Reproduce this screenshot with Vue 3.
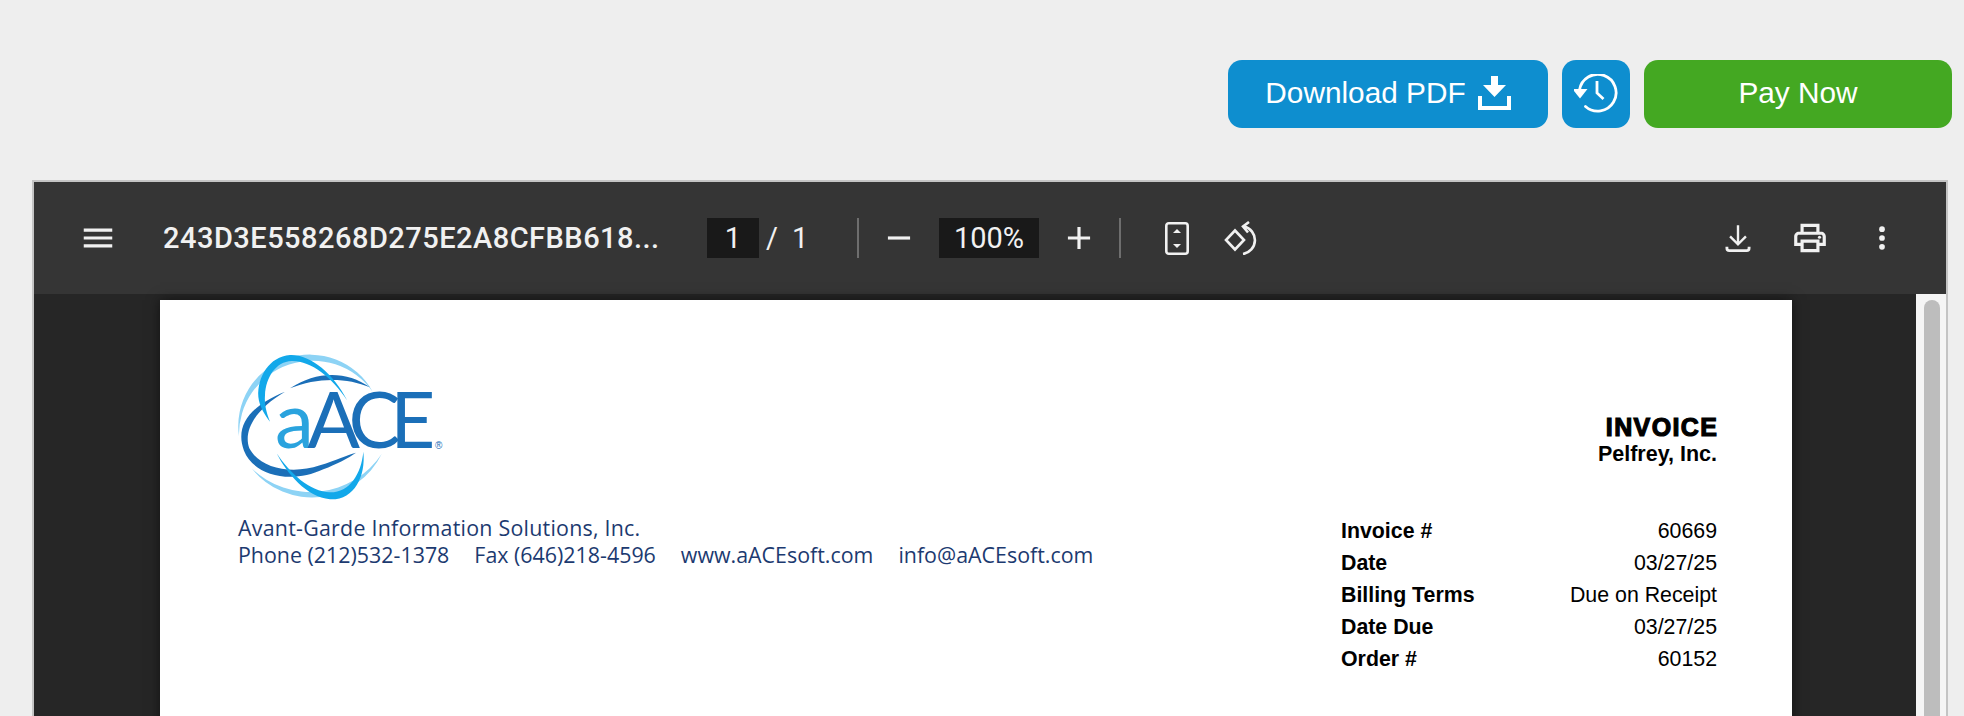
<template>
  <div class="screen">
    <div class="actions">
      <button class="btn btn-blue btn-download">
        <span>Download PDF</span>
        <svg class="ic-download" viewBox="0 0 33 34" fill="#fff">
          <path d="M13 0h7v9h8L16.500 21 5 9h8z" />
          <path d="M0 20h4v10h25V20h4v14H0z" />
        </svg>
      </button>
      <button class="btn btn-blue btn-history" aria-label="History">
        <svg viewBox="1.500 1 44 40" width="44" height="40" fill="none" stroke="#fff" stroke-width="2.800">
          <path d="M7 17A18.400 18.400 0 1 1 13 33.500" stroke-linecap="round" />
          <path d="M0 16h15l-7.500 9.500z" fill="#fff" stroke="none" />
          <path d="M24.500 8v12l6.500 6" />
        </svg>
      </button>
      <button class="btn btn-green btn-pay">Pay Now</button>
    </div>

    <div class="viewer">
      <div class="toolbar">
        <div class="tb-left">
          <svg class="tb-icon" viewBox="0 0 24 24" fill="#f1f1f1"><path d="M3 18h18v-2H3v2zm0-5h18v-2H3v2zm0-7v2h18V6H3z" /></svg>
          <span class="doc-title">243D3E558268D275E2A8CFBB618...</span>
        </div>
        <div class="tb-center">
          <span class="field field-page">1</span>
          <span class="slash">/</span>
          <span class="total">1</span>
          <span class="sep sep-first"></span>
          <svg class="tb-icon zoom-btn" viewBox="0 0 24 24" fill="#f1f1f1"><path d="M5 11h14v2H5z" /></svg>
          <span class="field field-zoom">100%</span>
          <svg class="tb-icon zoom-btn" viewBox="0 0 24 24" fill="#f1f1f1"><path d="M19 13h-6v6h-2v-6H5v-2h6V5h2v6h6v2z" /></svg>
          <span class="sep"></span>
          <svg class="ic-fit" viewBox="0 0 24 33">
            <rect x="1.300" y="1.300" width="21.400" height="30.400" rx="2.500" fill="none" stroke="#f1f1f1" stroke-width="2.600" />
            <path d="M12 7l4 4H8zM12 26l-4-4h8z" fill="#f1f1f1" />
          </svg>
          <svg class="ic-rotate" viewBox="0 0 36 34" fill="none" stroke="#f1f1f1" stroke-width="2.600">
            <path d="M11 9.500L20 19l-9 9.500L2 19z" />
            <path d="M19 33A14 14 0 0 0 20 5.500" />
            <path d="M25 1l-6 4.500 5 6" />
          </svg>
        </div>
        <div class="tb-right">
          <svg class="tb-icon" viewBox="0 0 24 24" fill="none" stroke="#f1f1f1" stroke-width="1.500">
            <path d="M12 4v11.500M7 11l5 5 5-5" />
            <path d="M5 17.500v1a1.500 1.500 0 0 0 1.500 1.500h11a1.500 1.500 0 0 0 1.500-1.500v-1" stroke-width="1.800" />
          </svg>
          <svg class="tb-icon" viewBox="0 0 24 24" fill="#f1f1f1">
            <path d="M19 8h-1V3H6v5H5c-1.660 0-3 1.340-3 3v6h4v4h12v-4h4v-6c0-1.660-1.340-3-3-3zM8 5h8v3H8V5zm8 14H8v-4h8v4zm2-4v-2H6v2H4v-4c0-.55.45-1 1-1h14c.55 0 1 .45 1 1v4h-2z" />
            <circle cx="18" cy="11.500" r="1" />
          </svg>
          <svg class="tb-icon" viewBox="0 0 24 24" fill="#f1f1f1">
            <circle cx="12" cy="6.400" r="1.800" />
            <circle cx="12" cy="12" r="1.800" />
            <circle cx="12" cy="17.600" r="1.800" />
          </svg>
        </div>
      </div>

      <div class="viewer-body">
        <div class="pages">
          <div class="page">
            <div class="page-left">
              <svg class="logo" viewBox="0 0 720 510">
                <path d="M458 155A215 215 0 0 0 57 290 221 221 0 0 1 458 155z" fill="#8dd3f5" />
                <path d="M485 342A232 232 0 0 1 95 385 256 256 0 0 0 485 342z" fill="#8dd3f5" />
                <path d="M450 142C380 92 290 92 210 145 290 112 380 112 450 142z" fill="#1b6fb8" />
                <path d="M195 155C85 200 45 260 72 332 100 405 210 435 310 388 350 372 385 355 408 338 380 345 350 360 300 376 210 406 118 382 88 325 68 270 110 205 195 155z" fill="#1b6fb8" />
                <path d="M382 182C340 100 270 42 210 45 148 50 112 110 115 170 118 200 135 225 150 245 138 215 133 190 135 165 138 112 167 65 215 63 270 61 335 110 382 182z" fill="#12a8ea" />
                <path d="M170 340C200 400 260 472 330 478 402 481 438 410 430 335 424 402 388 458 330 457 270 456 210 400 170 340z" fill="#12a8ea" />
                <text class="logo-a" x="165" y="323">a</text>
                <text class="logo-ace" x="262" y="323" textLength="384">ACE</text>
                <text class="logo-r" x="645" y="327">®</text>
              </svg>
              <div class="company">
                <div class="company-name">Avant-Garde Information Solutions, Inc.</div>
                <div class="contact">
                  <span>Phone (212)532-1378</span>
                  <span>Fax (646)218-4596</span>
                  <span>www.aACEsoft.com</span>
                  <span>info@aACEsoft.com</span>
                </div>
              </div>
            </div>
            <div class="page-right">
              <div class="inv-title">INVOICE</div>
              <div class="inv-client">Pelfrey, Inc.</div>
              <div class="inv-meta">
                <template v-for="row in meta" :key="row.label">
                  <b>{{ row.label }}</b>
                  <span>{{ row.value }}</span>
                </template>
              </div>
            </div>
          </div>
        </div>
        <div class="scrollbar"><div class="thumb"></div></div>
      </div>
    </div>
  </div>
</template>

<script setup>
const meta = [
  { label: 'Invoice #', value: '60669' },
  { label: 'Date', value: '03/27/25' },
  { label: 'Billing Terms', value: 'Due on Receipt' },
  { label: 'Date Due', value: '03/27/25' },
  { label: 'Order #', value: '60152' }
]
</script>

<style>
html, body {
  background: #eeeeee;
}
</style>

<style scoped>
.screen {
  display: flex;
  flex-direction: column;
  height: 716px;
  overflow: hidden;
  background: #eeeeee;
  font-family: "Liberation Sans", Arial, sans-serif;
}

.actions {
  display: flex;
  justify-content: flex-end;
  gap: 14px;
  padding: 60px 12px 52px 0;
}

.btn {
  display: flex;
  align-items: center;
  justify-content: center;
  height: 68px;
  border: none;
  border-radius: 14px;
  color: #fff;
  font-family: inherit;
  font-size: 29.800px;
  padding: 0 0 2px;
}

.btn-blue {
  background: #0e8ecf;
}

.btn-green {
  background: #44a822;
}

.btn-download {
  width: 320px;
  gap: 12px;
}

.ic-download {
  width: 33px;
  height: 34px;
}

.btn-history {
  width: 68px;
  padding: 0;
}

.btn-pay {
  width: 308px;
}

.viewer {
  flex: 1;
  display: flex;
  flex-direction: column;
  min-height: 0;
  margin-left: 32px;
  width: 1916px;
  border: 2px solid #c4c4c4;
  border-bottom: none;
  box-sizing: border-box;
  overflow: hidden;
}

.toolbar {
  display: flex;
  align-items: center;
  flex-shrink: 0;
  height: 112px;
  background: #353535;
  color: #f1f1f1;
  font-family: Roboto, sans-serif;
}

.tb-left {
  display: flex;
  align-items: center;
  width: 673px;
  padding-left: 45px;
  box-sizing: border-box;
}

.tb-icon {
  width: 38px;
  height: 38px;
  flex-shrink: 0;
}

.doc-title {
  margin-left: 46px;
  font-size: 29px;
  font-weight: 500;
  letter-spacing: 0.480px;
  white-space: nowrap;
}

.tb-center {
  display: flex;
  align-items: center;
}

.field {
  display: flex;
  align-items: center;
  justify-content: center;
  height: 40px;
  background: #191919;
  font-size: 29px;
}

.field-page {
  width: 52px;
}

.field-zoom {
  width: 100px;
}

.slash {
  width: 11px;
  margin-left: 7px;
  font-size: 29px;
}

.total {
  width: 16px;
  margin-left: 15px;
  font-size: 29px;
}

.sep {
  width: 2px;
  height: 40px;
  background: #6e6e6e;
}

.sep-first {
  margin-left: 49px;
}

.zoom-btn {
  margin: 0 21px;
}

.ic-fit {
  width: 24px;
  height: 33px;
  margin-left: 44px;
}

.ic-rotate {
  width: 36px;
  height: 34px;
  margin-left: 35px;
}

.tb-right {
  display: flex;
  align-items: center;
  gap: 34px;
  margin-left: auto;
  padding-right: 45px;
}

.viewer-body {
  flex: 1;
  display: flex;
  min-height: 0;
  background: #262626;
}

.pages {
  flex: 1;
  display: flex;
  justify-content: center;
  padding: 6px 0 0 2px;
}

.page {
  display: flex;
  justify-content: space-between;
  flex-shrink: 0;
  width: 1632px;
  height: 900px;
  padding: 40px 75px 0 60px;
  box-sizing: border-box;
  background: #fff;
  box-shadow: 0 0 12px rgba(0, 0, 0, 0.55);
}

.logo {
  display: block;
  width: 240px;
  height: 170px;
}

.logo-a,
.logo-ace {
  font-family: Lato, sans-serif;
  font-size: 234px;
}

.logo-a {
  fill: #2aa3de;
}

.logo-ace {
  fill: #1b6fb8;
}

.logo-r {
  fill: #1b6fb8;
  font-family: "Liberation Sans", sans-serif;
  font-size: 30px;
}

.company {
  padding-left: 18px;
  margin-top: 4px;
  color: #1c3a70;
  font-family: "Open Sans", sans-serif;
  font-size: 21.400px;
  line-height: 27px;
  white-space: nowrap;
}

.company-name {
  letter-spacing: 0.240px;
}

.contact {
  display: flex;
  gap: 25px;
}

.page-right {
  padding-top: 73px;
  color: #000;
}

.inv-title {
  margin-right: -1.400px;
  text-align: right;
  font-size: 25px;
  font-weight: 700;
  letter-spacing: 1.400px;
  line-height: 29px;
  -webkit-text-stroke: 1.200px #000;
}

.inv-client {
  text-align: right;
  font-size: 21.500px;
  font-weight: 700;
  line-height: 24px;
}

.inv-meta {
  display: grid;
  grid-template-columns: 1fr auto;
  column-gap: 94px;
  width: 376px;
  margin-top: 49px;
  font-size: 21.330px;
  line-height: 32px;
}

.inv-meta span {
  text-align: right;
}

.scrollbar {
  width: 30px;
  padding: 6px 6px 0 8px;
  box-sizing: border-box;
  background: #f5f5f5;
}

.thumb {
  height: 700px;
  background: #bdbdbd;
  border-radius: 8px;
}
</style>
